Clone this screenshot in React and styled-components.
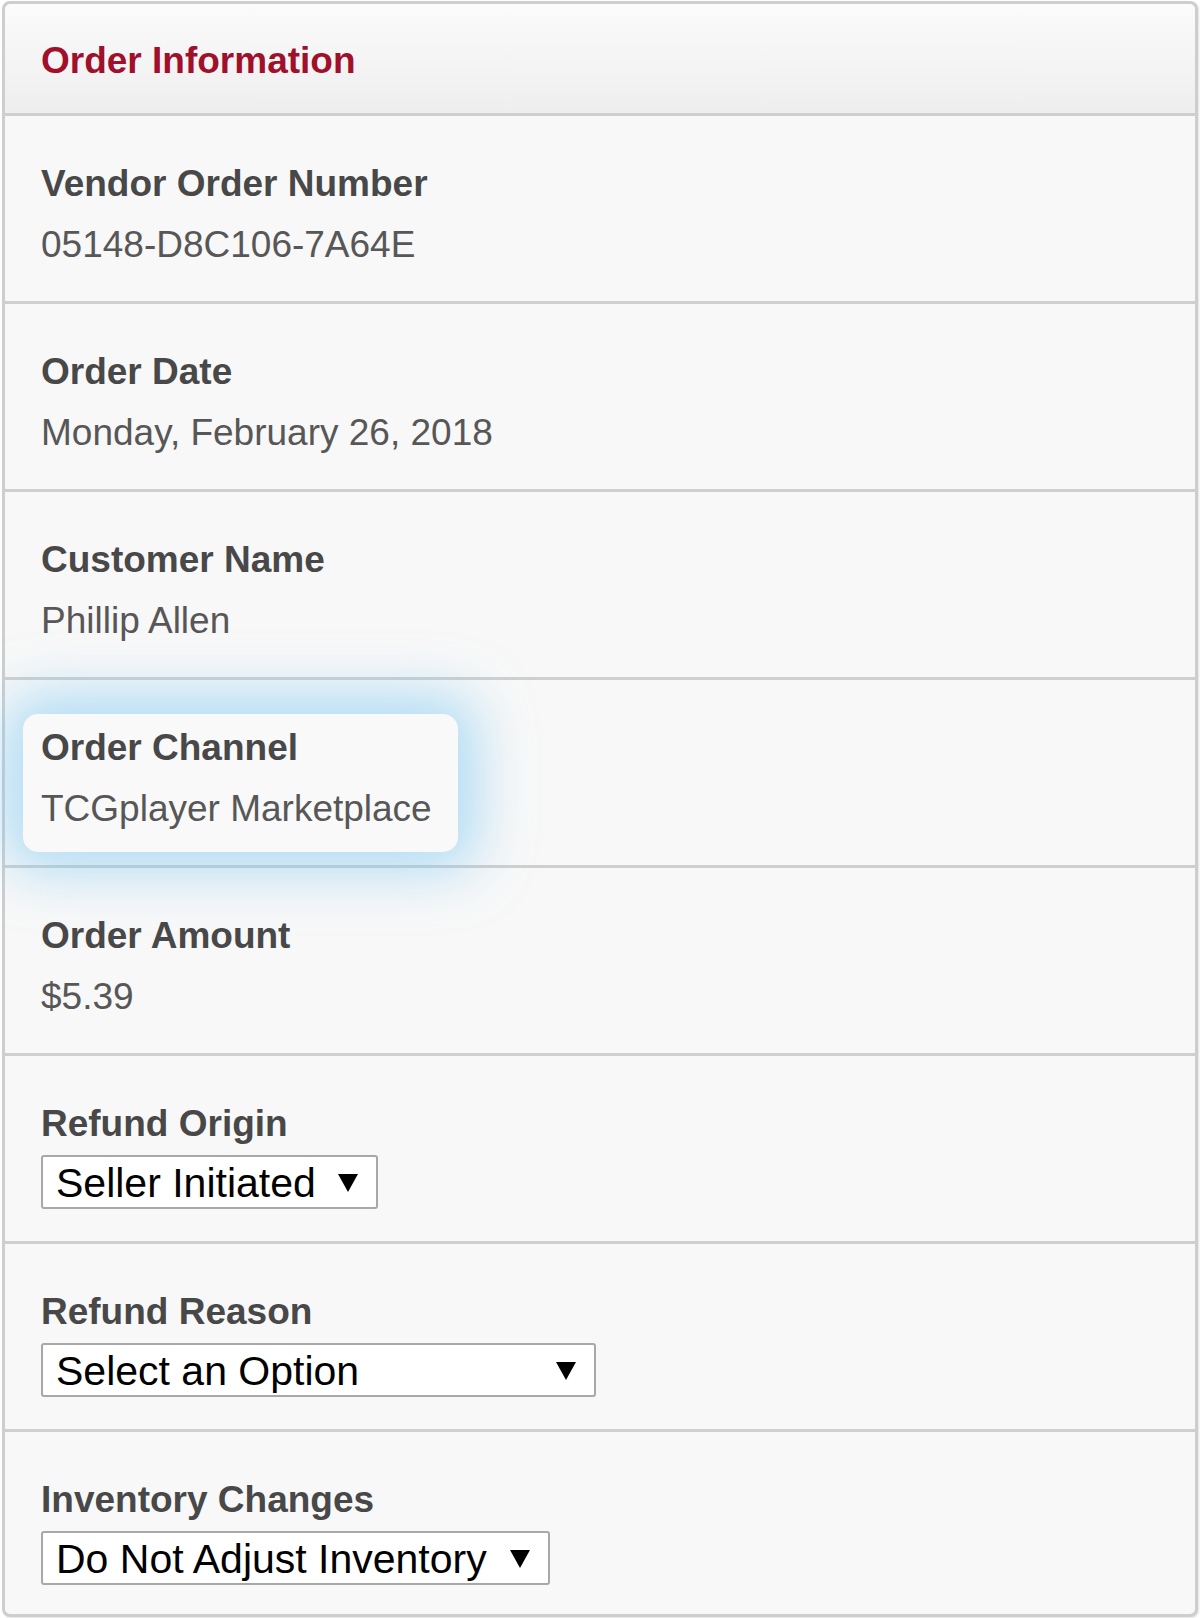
import React from "react";
import styled, { createGlobalStyle } from "styled-components";

const Global = createGlobalStyle`
  html, body { margin: 0; padding: 0; background: #ffffff; }
  body { font-family: "Liberation Sans", Arial, sans-serif; }
`;

const Page = styled.div`
  padding: 1px 2px 1px 2px;
`;

const Panel = styled.section`
  background: #f8f8f8;
  border: 3px solid #cecece;
  border-radius: 8px;
  box-shadow: 1px 1px 2px rgba(0, 0, 0, 0.12);
`;

const Header = styled.header`
  padding: 31px 36px 27px;
  background: linear-gradient(#fbfbfb, #eeeeee);
  border-bottom: 3px solid #cfcfcf;
  border-radius: 6px 6px 0 0;
`;

const Title = styled.h2`
  margin: 0;
  font-size: 37px;
  line-height: 51px;
  font-weight: bold;
  color: #a0102b;
`;

const Row = styled.div`
  padding: 42px 36px ${(p) => (p.$select ? "32px" : "31px")};
  border-bottom: 3px solid #cfcfcf;
  &:last-child {
    border-bottom: none;
    padding-bottom: 29px;
  }
`;

const Card = styled.div`
  display: inline-block;
  margin: -8px 0 -18px -18px;
  padding: 8px 26px 18px 18px;
  background: #f9f9f9;
  border-radius: 15px;
  box-shadow: 0 0 55px 18px rgba(125, 200, 244, 0.6);
`;

const Label = styled.div`
  font-size: 37px;
  line-height: 51px;
  font-weight: bold;
  color: #484848;
  margin-bottom: ${(p) => (p.$select ? "6px" : "10px")};
`;

const Value = styled.div`
  font-size: 37px;
  line-height: 51px;
  color: #575757;
`;

const SelectBox = styled.div`
  box-sizing: border-box;
  display: flex;
  align-items: center;
  justify-content: space-between;
  height: 54px;
  padding: 2px 18px 0 13px;
  background: #ffffff;
  border: 2px solid #a8a8a8;
  border-radius: 3px;
  font-size: 41px;
  color: #000000;
  white-space: nowrap;
  cursor: default;
`;

const Arrow = () => (
  <svg width="20" height="18" viewBox="0 0 20 18" aria-hidden="true">
    <polygon points="0,0 20,0 10,18" fill="#000" />
  </svg>
);

const Select = ({ value, width }) => (
  <SelectBox role="combobox" style={{ width }}>
    <span>{value}</span>
    <Arrow />
  </SelectBox>
);

const fields = [
  { label: "Vendor Order Number", value: "05148-D8C106-7A64E" },
  { label: "Order Date", value: "Monday, February 26, 2018" },
  { label: "Customer Name", value: "Phillip Allen" },
  { label: "Order Channel", value: "TCGplayer Marketplace", highlight: true },
  { label: "Order Amount", value: "$5.39" },
];

const selects = [
  { label: "Refund Origin", value: "Seller Initiated", width: 337 },
  { label: "Refund Reason", value: "Select an Option", width: 555 },
  { label: "Inventory Changes", value: "Do Not Adjust Inventory", width: 509 },
];

export default function App() {
  return (
    <Page>
      <Global />
      <Panel>
        <Header>
          <Title>Order Information</Title>
        </Header>
        {fields.map((f) => {
          const inner = (
            <>
              <Label>{f.label}</Label>
              <Value>{f.value}</Value>
            </>
          );
          return (
            <Row key={f.label}>
              {f.highlight ? <Card>{inner}</Card> : inner}
            </Row>
          );
        })}
        {selects.map((s) => (
          <Row key={s.label} $select>
            <Label $select>{s.label}</Label>
            <Select value={s.value} width={s.width} />
          </Row>
        ))}
      </Panel>
    </Page>
  );
}
